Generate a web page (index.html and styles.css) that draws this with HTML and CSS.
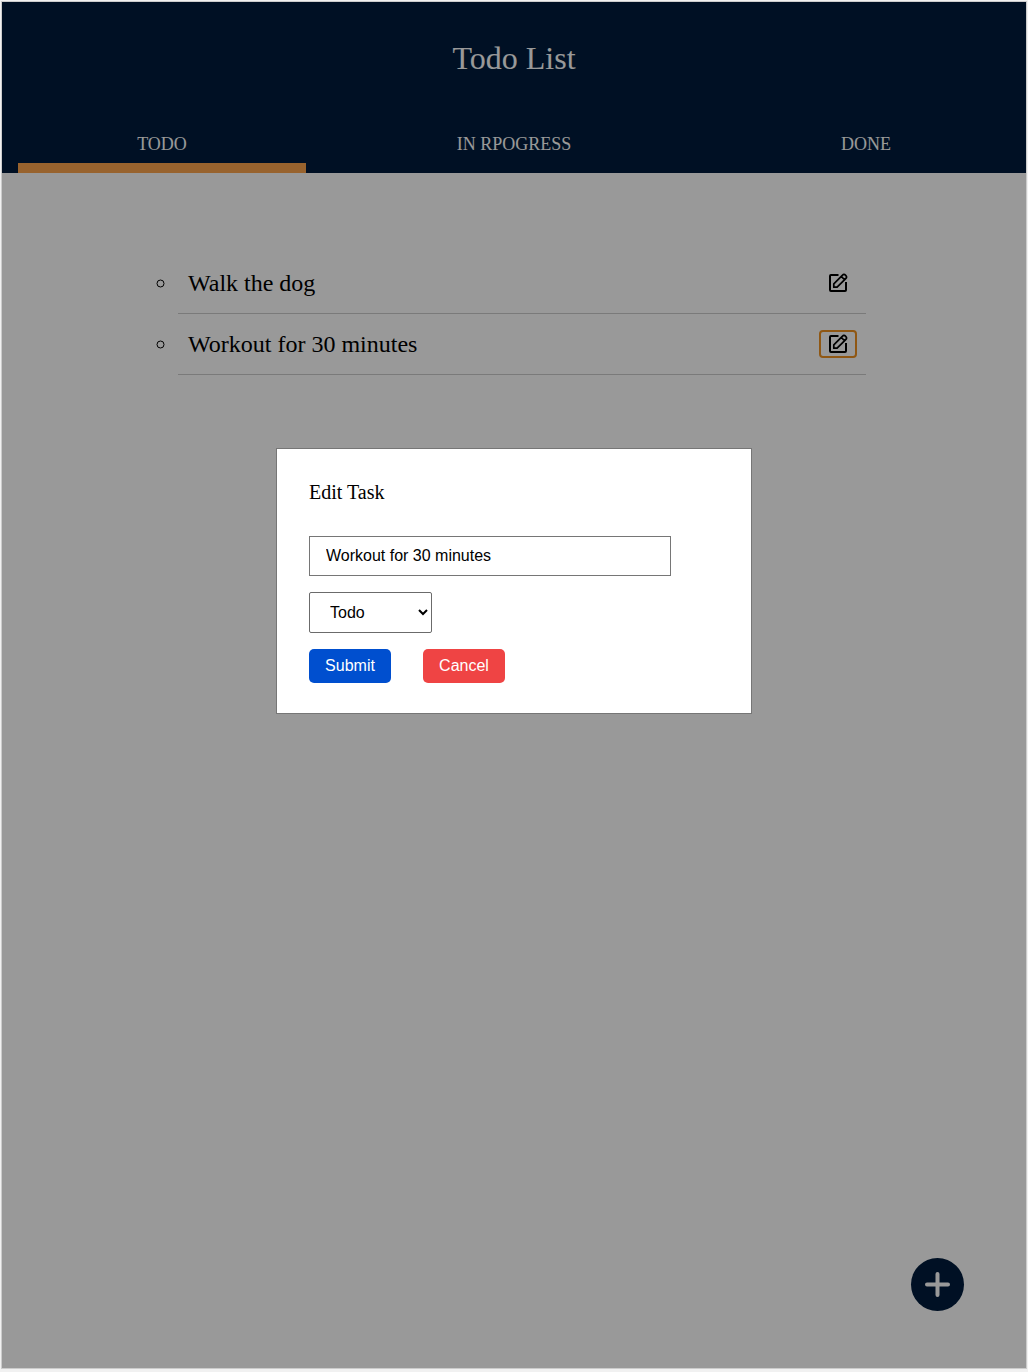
FILE: index.html
```html
<!DOCTYPE html>
<html lang="en">
<head>
  <meta charset="utf-8">
  <meta name="viewport" content="width=device-width, initial-scale=1">
  <title>Todo List</title>
  <link rel="stylesheet" href="styles.css">
</head>
<body>
  <div class="app">
    <header class="header">
      <h1 class="title">Todo List</h1>
      <nav class="tabs">
        <button class="tab tab-active" type="button">TODO</button>
        <button class="tab" type="button">IN RPOGRESS</button>
        <button class="tab" type="button">DONE</button>
      </nav>
    </header>
    <main class="main">
      <ul class="tasks">
        <li class="task">
          <div class="task-row">
            <span>Walk the dog</span>
            <button class="edit" type="button" aria-label="Edit Walk the dog">
              <svg class="edit-icon" viewBox="0 0 20 20" aria-hidden="true"><path d="M10.500 2H3Q2 2 2 3V17Q2 18 3 18H17Q18 18 18 17V9"/><path class="pencil" d="M5.800 14.200V10.900L14.300 2.300A2.350 2.350 0 0 1 17.700 5.700L9.100 14.200ZM13.300 3.500L16.500 6.700"/></svg>
            </button>
          </div>
        </li>
        <li class="task">
          <div class="task-row">
            <span>Workout for 30 minutes</span>
            <button class="edit edit-selected" type="button" aria-label="Edit Workout for 30 minutes">
              <svg class="edit-icon" viewBox="0 0 20 20" aria-hidden="true"><path d="M10.500 2H3Q2 2 2 3V17Q2 18 3 18H17Q18 18 18 17V9"/><path class="pencil" d="M5.800 14.200V10.900L14.300 2.300A2.350 2.350 0 0 1 17.700 5.700L9.100 14.200ZM13.300 3.500L16.500 6.700"/></svg>
            </button>
          </div>
        </li>
      </ul>
    </main>
    <button class="add" type="button" aria-label="Add task">
      <svg class="add-icon" viewBox="0 0 25 25" aria-hidden="true"><path d="M12.500 2V23M2 12.500H23"/></svg>
    </button>
    <div class="overlay">
      <form class="modal" role="dialog" aria-labelledby="modal-title">
        <h2 class="modal-title" id="modal-title">Edit Task</h2>
        <input class="field" type="text" value="Workout for 30 minutes" aria-label="Task name">
        <select class="status" aria-label="Status">
          <option>Todo</option>
          <option>In Progress</option>
          <option>Done</option>
        </select>
        <div class="actions">
          <button class="action submit" type="submit">Submit</button>
          <button class="action cancel" type="button">Cancel</button>
        </div>
      </form>
    </div>
  </div>
</body>
</html>
```
FILE: styles.css
```css
* {
  box-sizing: border-box;
}

body {
  margin: 0;
  padding: 1px 1px 3px;
  background: #f1f1f1;
  color: #000;
  font-family: "Liberation Serif", "Times New Roman", serif;
}

button {
  font-family: inherit;
  cursor: pointer;
}

.app {
  position: relative;
  min-height: calc(100vh - 4px);
  border: 1px solid #ccc;
  background: #fff;
}

.header {
  padding: 36px 16px 0;
  background: #001c3c;
  color: #fff;
}

.title {
  margin: 0 0 47px;
  font-size: 32px;
  font-weight: 400;
  line-height: 40px;
  text-align: center;
}

.tabs {
  display: grid;
  grid-template-columns: repeat(3, 1fr);
  gap: 64px;
}

.tab {
  height: 48px;
  padding: 0;
  border: 0;
  border-bottom: 10px solid transparent;
  background: none;
  color: inherit;
  font-size: 18px;
}

.tab-active {
  border-bottom-color: #fda64e;
}

.main {
  padding: 80px 160px;
}

.tasks {
  margin: 0;
  padding: 0 0 0 16px;
  list-style: circle;
}

.task {
  border-bottom: 1px solid #ccc;
  font-size: 24px;
}

.task-row {
  display: flex;
  align-items: center;
  justify-content: space-between;
  height: 60px;
  padding: 0 9px 0 10px;
}

.edit {
  display: flex;
  align-items: center;
  justify-content: center;
  width: 38px;
  height: 28px;
  padding: 0;
  border: 2px solid transparent;
  border-radius: 4px;
  background: none;
}

.edit-selected {
  border-color: #ee9121;
}

.edit-icon {
  width: 20px;
  height: 20px;
  fill: none;
  stroke: #000;
  stroke-width: 2;
  stroke-linejoin: round;
}

.pencil {
  stroke-width: 1.7;
}

.add {
  position: absolute;
  right: 62px;
  bottom: 57px;
  display: flex;
  align-items: center;
  justify-content: center;
  width: 53px;
  height: 53px;
  padding: 0;
  border: 0;
  border-radius: 50%;
  background: #001c3c;
}

.add-icon {
  width: 25px;
  height: 25px;
  stroke: #fff;
  stroke-width: 4;
  stroke-linecap: round;
}

.overlay {
  position: absolute;
  inset: 0;
  display: flex;
  align-items: flex-start;
  justify-content: center;
  padding: 446px 16px 16px;
  background: rgba(0, 0, 0, 0.4);
}

.modal {
  display: flex;
  flex-direction: column;
  align-items: flex-start;
  gap: 16px;
  width: 476px;
  max-width: 100%;
  padding: 31px 32px 30px;
  border: 1px solid #767676;
  background: #fff;
}

.modal-title {
  margin: 0 0 16px;
  font-size: 20px;
  font-weight: 400;
  line-height: 24px;
}

.field,
.status,
.action {
  font-family: "Liberation Sans", Arial, sans-serif;
  font-size: 16px;
}

.field {
  width: 362px;
  max-width: 100%;
  height: 40px;
  padding: 0 16px;
  border: 1px solid #767676;
  background: #fff;
  color: #000;
}

.status {
  width: 123px;
  height: 41px;
  padding: 0 0 0 16px;
  border: 1px solid #6b6b6b;
  border-radius: 2px;
  background: #fff;
  color: #000;
}

.actions {
  display: flex;
  gap: 32px;
}

.action {
  width: 82px;
  height: 34px;
  padding: 0;
  border: 0;
  border-radius: 5px;
  color: #fff;
}

.submit {
  background: #004fcf;
}

.cancel {
  background: #ef4444;
}
```
